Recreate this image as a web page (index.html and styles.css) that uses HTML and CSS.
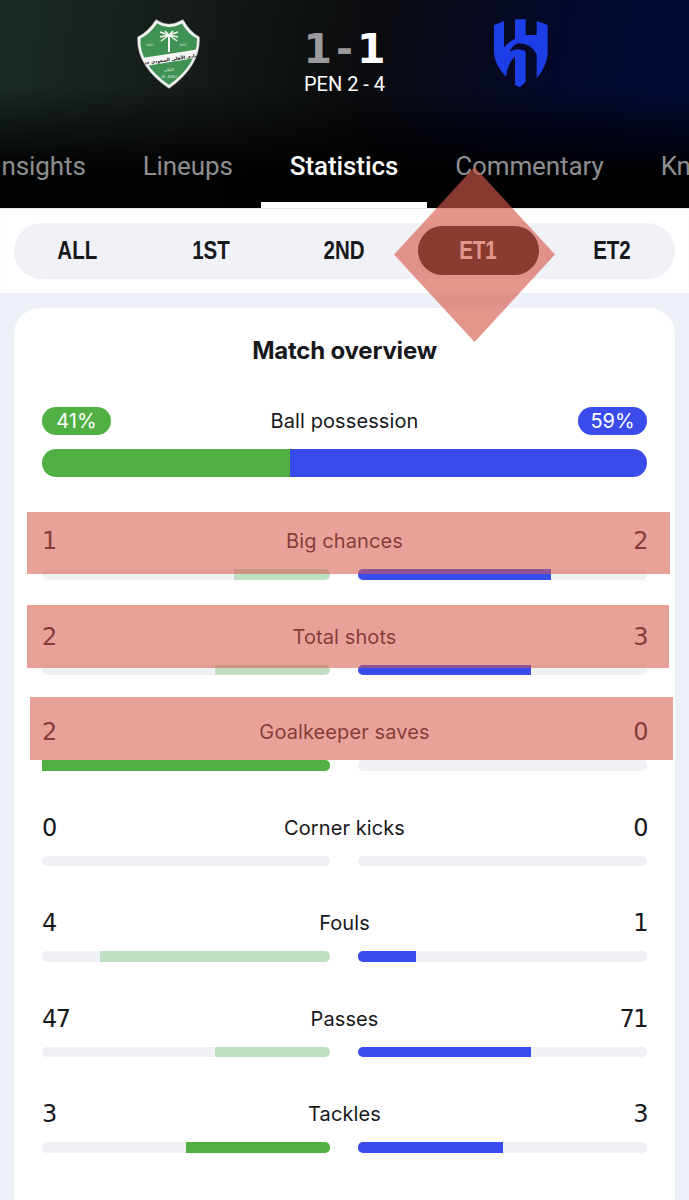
FILE: index.html
```html
<!DOCTYPE html>
<html lang="en">
<head>
<meta charset="utf-8">
<title>Match statistics</title>
<link rel="stylesheet" href="styles.css">
</head>
<body>
<header class="hero">
  <div class="teams">
    <div class="team">
      <svg class="crest" width="64" height="72" viewBox="137 18 64 72" aria-label="Al Ahli">
        <path class="crest-edge" d="M137.5 37Q148 32 156 19.5Q163 24 169 24Q175 24 183 19.5Q190 32 199.5 37Q201 66 169 88.5Q136 66 137.5 37Z"/>
        <path class="crest-green" d="M140.5 38.5Q150 34 157 23.5Q163 27 169 27Q175 27 182 23.5Q188 34 197 38.5Q198 64 169 85Q139 64 140.5 38.5Z"/>
        <path class="crest-band" d="M142 58L197 49.5L195.5 58L146 66Z"/>
        <g class="crest-palm">
          <path d="M169 35L160 32M169 35L160 37M169 35L161 41M169 35L178 32M169 35L178 37M169 35L177 41M169 35L165 31M169 35L173 31"/>
          <path class="crest-trunk" d="M169 35V52"/>
        </g>
        <text class="crest-year" x="150" y="46">1937</text>
        <text class="crest-year" x="183" y="46">1937</text>
        <text class="crest-line" x="169" y="61" transform="rotate(-8 169 61)">نادي الأهلي السعودي جدة</text>
        <text class="crest-white" x="169" y="71">الأهلي</text>
        <text class="crest-white" x="169" y="78">AL AHLI</text>
      </svg>
    </div>
    <div class="score">
      <div class="score-main"><span class="dim">1</span><span class="dim dash">-</span><span>1</span></div>
      <div class="score-pen">PEN 2 - 4</div>
    </div>
    <div class="team">
      <svg class="crest" width="56" height="72" viewBox="39 24 168 216" aria-label="Al Hilal">
        <path class="hilal" d="M42 45L72 33V112Q88 94 105 86V28H137V75H170V33L203 45V130Q200 170 170 205V132Q150 100 118 100Q100 102 88 126Q112 110 137 124V215L120 232L105 225V140Q84 158 78 200Q44 165 42 130Z"/>
      </svg>
    </div>
  </div>
  <nav class="tabs">
    <span class="tab first">Insights</span>
    <span class="tab">Lineups</span>
    <span class="tab active">Statistics</span>
    <span class="tab">Commentary</span>
    <span class="tab">Knowledge</span>
  </nav>
</header>

<section class="filter">
  <div class="periods">
    <span class="period"><span class="period-text">ALL</span></span>
    <span class="period"><span class="period-text">1ST</span></span>
    <span class="period"><span class="period-text">2ND</span></span>
    <span class="period selected"><span class="period-text">ET1</span></span>
    <span class="period"><span class="period-text">ET2</span></span>
  </div>
</section>

<main class="card">
  <h1 class="card-title">Match overview</h1>
  <div class="possession">
    <div class="stat-head">
      <span class="chip green">41%</span>
      <span class="label">Ball possession</span>
      <span class="chip blue">59%</span>
    </div>
    <div class="poss-bar">
      <span class="poss-home" style="width:41%"></span>
      <span class="poss-away"></span>
    </div>
  </div>

  <div class="stats">
    <div class="stat">
      <div class="stat-head"><span class="val">1</span><span class="label">Big chances</span><span class="val">2</span></div>
      <div class="bars">
        <div class="track home"><span class="fill pale" style="width:33.3%"></span></div>
        <div class="track away"><span class="fill bluefill" style="width:66.7%"></span></div>
      </div>
    </div>
    <div class="stat">
      <div class="stat-head"><span class="val">2</span><span class="label">Total shots</span><span class="val">3</span></div>
      <div class="bars">
        <div class="track home"><span class="fill pale" style="width:40%"></span></div>
        <div class="track away"><span class="fill bluefill" style="width:60%"></span></div>
      </div>
    </div>
    <div class="stat">
      <div class="stat-head"><span class="val">2</span><span class="label">Goalkeeper saves</span><span class="val">0</span></div>
      <div class="bars">
        <div class="track home"><span class="fill greenfill" style="width:100%"></span></div>
        <div class="track away"></div>
      </div>
    </div>
    <div class="stat">
      <div class="stat-head"><span class="val">0</span><span class="label">Corner kicks</span><span class="val">0</span></div>
      <div class="bars">
        <div class="track home"></div>
        <div class="track away"></div>
      </div>
    </div>
    <div class="stat">
      <div class="stat-head"><span class="val">4</span><span class="label">Fouls</span><span class="val">1</span></div>
      <div class="bars">
        <div class="track home"><span class="fill pale" style="width:80%"></span></div>
        <div class="track away"><span class="fill bluefill" style="width:20%"></span></div>
      </div>
    </div>
    <div class="stat">
      <div class="stat-head"><span class="val">47</span><span class="label">Passes</span><span class="val">71</span></div>
      <div class="bars">
        <div class="track home"><span class="fill pale" style="width:40%"></span></div>
        <div class="track away"><span class="fill bluefill" style="width:60%"></span></div>
      </div>
    </div>
    <div class="stat">
      <div class="stat-head"><span class="val">3</span><span class="label">Tackles</span><span class="val">3</span></div>
      <div class="bars">
        <div class="track home"><span class="fill greenfill" style="width:50%"></span></div>
        <div class="track away"><span class="fill bluefill" style="width:50%"></span></div>
      </div>
    </div>
  </div>
</main>

<div class="mark diamond"></div>
<div class="mark redact r1"></div>
<div class="mark redact r2"></div>
<div class="mark redact r3"></div>
</body>
</html>
```

FILE: styles.css
```css
* { box-sizing: border-box; }
html, body { margin: 0; height: 1200px; overflow: hidden; }
body {
  position: relative;
  background: #edf0f6;
  font-family: Inter, "Liberation Sans", sans-serif;
  color: #17181c;
}

/* Header */
.hero {
  height: 208px;
  padding-top: 18px;
  overflow: hidden;
  background:
    linear-gradient(180deg, rgba(0,0,0,0) 42%, rgba(0,0,0,.95) 82%),
    linear-gradient(100deg, #1c2a25 0%, #151b18 28%, #0a0b0e 52%, #03082a 78%, #020a36 100%);
}
.teams {
  display: grid;
  grid-template-columns: repeat(3, 176px);
  justify-content: center;
  height: 72px;
  margin-bottom: 34px;
}
.team { display: flex; justify-content: center; }
.crest { display: block; }
.crest-edge { fill: #f1f3f1; stroke: #8d9690; stroke-width: .5; }
.crest-green { fill: #3f9253; }
.crest-band { fill: #f5f6f4; }
.crest-palm path { stroke: #f5f6f4; stroke-width: 1.4; fill: none; }
.crest-palm .crest-trunk { stroke-width: 2; }
.crest-year { font: 3px "DejaVu Sans", sans-serif; fill: #e5eee6; text-anchor: middle; }
.crest-line { font: bold 4.4px "DejaVu Sans", sans-serif; fill: #111; text-anchor: middle; }
.crest-white { font: 4px "DejaVu Sans", sans-serif; fill: #e5eee6; text-anchor: middle; }
.hilal { fill: #1b3ee6; }

.score {
  display: flex;
  flex-direction: column;
  align-items: center;
  color: #fff;
}
.score-main {
  display: flex;
  height: 50px;
  margin-top: 6px;
  font: bold 41px/50px "DejaVu Sans", sans-serif;
}
.dash { margin: 0 4px; }
.dim { color: #9b9b9d; }
.score-pen {
  font-family: Roboto, "Liberation Sans", sans-serif;
  font-size: 20px;
  line-height: 24px;
  margin-top: -2px;
}

.tabs { display: flex; height: 84px; white-space: nowrap; }
.tab {
  position: relative;
  display: flex;
  align-items: center;
  flex: none;
  padding: 0 28.5px;
  font-family: Roboto, "Liberation Sans", sans-serif;
  font-weight: 400;
  font-size: 26px;
  letter-spacing: -.1px;
  color: #8e8e90;
}
.tab.first { margin-left: -34px; }
.tab.active { color: #fff; font-weight: 500; }
.tab.active::after {
  content: "";
  position: absolute;
  left: 0;
  right: 0;
  bottom: 0;
  height: 6px;
  background: #fff;
}

/* Period filter */
.filter {
  height: 85px;
  padding: 15px 14px 14px;
  background: #fff;
  box-shadow: inset 0 1px 1px rgba(0,0,0,.12);
}
.periods {
  display: flex;
  justify-content: center;
  gap: 12.5px;
  height: 56px;
  padding: 3px 3px 4px;
  border-radius: 28px;
  background: #f0f2f7;
}
.period {
  display: flex;
  flex: 0 0 121px;
  align-items: center;
  justify-content: center;
  border-radius: 25px;
  font-family: "Liberation Sans", sans-serif;
  font-weight: 700;
  font-size: 25px;
  color: #17181c;
}
.period-text { display: block; transform: scaleX(.82); }
.period.selected { background: #050505; color: #fff; }

/* Card */
.card {
  height: 940px;
  margin: 15px 14px 0;
  padding: 27px 28px 0;
  border-radius: 26px 26px 0 0;
  background: #fff;
}
.card-title {
  margin: 0 0 40px;
  height: 32px;
  font-size: 24px;
  line-height: 32px;
  font-weight: 700;
  text-align: center;
  letter-spacing: -.2px;
}
.stat-head {
  display: flex;
  align-items: center;
  justify-content: space-between;
  height: 28px;
}
.label { font-size: 20px; line-height: 28px; letter-spacing: .1px; }
.chip {
  display: flex;
  align-items: center;
  justify-content: center;
  width: 69px;
  height: 28px;
  border-radius: 14px;
  color: #fff;
  font-size: 20px;
}
.chip.green { background: #51b043; }
.chip.blue { background: #3a4bec; }

.poss-bar {
  display: flex;
  height: 28px;
  margin-top: 14px;
  border-radius: 14px;
  overflow: hidden;
}
.poss-home { background: #51b043; }
.poss-away { flex: 1; background: #3a4bec; }

.stats {
  display: flex;
  flex-direction: column;
  gap: 43px;
  margin-top: 50px;
}
.stat { height: 52.5px; }
.val {
  font: 24px/28px "DejaVu Sans", sans-serif;
  letter-spacing: -1.5px;
}
.bars {
  display: grid;
  grid-template-columns: 288px 289px;
  justify-content: space-between;
  margin-top: 14px;
}
.track {
  display: flex;
  height: 10.5px;
  border-radius: 5px;
  background: #f0f1f4;
}
.track.home { justify-content: flex-end; }
.fill { display: block; height: 100%; }
.home .fill { border-radius: 0 5px 5px 0; }
.away .fill { border-radius: 5px 0 0 5px; }
.pale { background: #bfe0c2; }
.greenfill { background: #51b043; }
.bluefill { background: #3a4bec; }

/* Red markings drawn over the screenshot */
.mark { position: absolute; background: rgba(215, 90, 75, .56); }
.diamond {
  left: 394px;
  top: 167px;
  width: 161px;
  height: 175px;
  background: rgba(215, 90, 75, .64);
  clip-path: polygon(50% 0, 100% 50%, 50% 100%, 0 50%);
}
.r1 { left: 27px; top: 512px; width: 643px; height: 62px; }
.r2 { left: 27px; top: 605px; width: 642px; height: 63px; }
.r3 { left: 30px; top: 697px; width: 643px; height: 63px; }
```
